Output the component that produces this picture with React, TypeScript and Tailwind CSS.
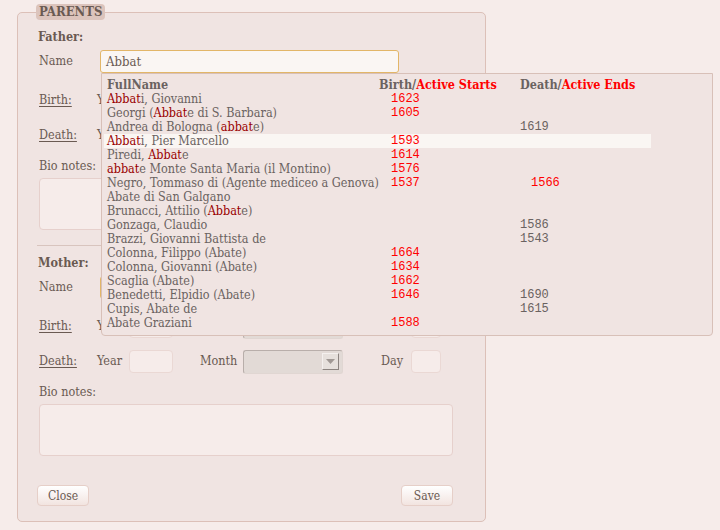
import React from "react";

type Row = {
  name: React.ReactNode;
  birth?: string;
  death?: string;
  deathActive?: boolean;
  selected?: boolean;
};

const M = ({ children }: { children: React.ReactNode }) => (
  <span className="text-[#990000]">{children}</span>
);

const rows: Row[] = [
  { name: <><M>Abbat</M>i, Giovanni</>, birth: "1623" },
  { name: <>Georgi (<M>Abbat</M>e di S. Barbara)</>, birth: "1605" },
  { name: <>Andrea di Bologna (<M>abbat</M>e)</>, death: "1619" },
  { name: <><M>Abbat</M>i, Pier Marcello</>, birth: "1593", selected: true },
  { name: <>Piredi, <M>Abbat</M>e</>, birth: "1614" },
  { name: <><M>abbat</M>e Monte Santa Maria (il Montino)</>, birth: "1576" },
  { name: <>Negro, Tommaso di (Agente mediceo a Genova)</>, birth: "1537", death: "1566", deathActive: true },
  { name: <>Abate di San Galgano</> },
  { name: <>Brunacci, Attilio (<M>Abbat</M>e)</> },
  { name: <>Gonzaga, Claudio</>, death: "1586" },
  { name: <>Brazzi, Giovanni Battista de</>, death: "1543" },
  { name: <>Colonna, Filippo (Abate)</>, birth: "1664" },
  { name: <>Colonna, Giovanni (Abate)</>, birth: "1634" },
  { name: <>Scaglia (Abate)</>, birth: "1662" },
  { name: <>Benedetti, Elpidio (Abate)</>, birth: "1646", death: "1690" },
  { name: <>Cupis, Abate de</>, death: "1615" },
  { name: <>Abate Graziani</>, birth: "1588" },
];

function DateRow({ label, className }: { label: string; className: string }) {
  return (
    <div className={"flex items-center h-[23px] " + className}>
      <span className="w-[58px] underline underline-offset-2">{label}</span>
      <span className="w-[32px]">Year</span>
      <div className="w-[44px] h-[23px] rounded-[4px] border border-[#ead8d4] bg-[#f6ecea]" />
      <span className="ml-[27px] w-[43px]">Month</span>
      <div className="w-[100px] h-[24px] rounded-[3px] border border-[#b8aeaa] border-b-[#e0d6d2] border-r-[#e0d6d2] bg-[#e2dad6] flex items-center justify-end pr-[3px]">
        <div className="w-[17px] h-[17px] bg-[#e6e0dc] border border-[#f4f0ee] border-b-[#8c8480] border-r-[#8c8480] flex items-center justify-center">
          <svg width="9" height="5" viewBox="0 0 9 5">
            <path d="M0 0 H9 L4.5 5 Z" fill="#a09894" />
          </svg>
        </div>
      </div>
      <span className="ml-[38px] w-[30px]">Day</span>
      <div className="w-[30px] h-[23px] rounded-[4px] border border-[#ead8d4] bg-[#f6ecea]" />
    </div>
  );
}

function Person({ title, value }: { title: string; value?: string }) {
  return (
    <div>
      <div className="h-[14px] leading-[14px] font-bold -ml-[1px]">{title}</div>
      <div className="flex items-center mt-[6px] h-[23px]">
        <span className="w-[61px]">Name</span>
        <div className="w-[299px] h-[23px] rounded-[3px] border border-[#e2b668] bg-[#faf6f3] px-[5px] flex items-center text-[13px] text-[#6a5a52]">
          {value}
        </div>
      </div>
      <DateRow label="Birth:" className="mt-[16px]" />
      <DateRow label="Death:" className="mt-[12px]" />
      <div className="mt-[12px] h-[14px] leading-[14px]">Bio notes:</div>
      <div className="mt-[5px] w-[414px] h-[52px] rounded-[4px] border border-[#e6d0cc] bg-[#f6ecea]" />
    </div>
  );
}

export default function App() {
  return (
    <div className="relative w-[720px] min-h-[530px] bg-[#f6ecea] pt-[4px] pl-[17px] font-['DejaVu_Serif_Condensed','DejaVu_Serif',serif] text-[12.5px] text-[#6a5a52]">
      <fieldset className="w-[469px] border border-[#dcc0b8] rounded-[5px] bg-[#f0e4e2] pl-[21px] pt-[10px] pb-[15px]">
        <legend className="-ml-[3px] px-[3px] h-[16px] leading-[16px] rounded-[4px] bg-[#dcc4bc] font-bold text-[13px] text-[#6a5a52]">
          PARENTS
        </legend>
        <Person title="Father:" value="Abbat" />
        <div className="mt-[15px] -ml-[2px] w-[428px] border-t border-[#d8c4be]" />
        <div className="mt-[10px]">
          <Person title="Mother:" />
        </div>
        <div className="mt-[29px] -ml-[2px] w-[416px] flex justify-between">
          <button className="w-[52px] h-[21px] rounded-[4px] border border-[#e6cfc8] bg-gradient-to-b from-white to-[#f2e4e0] text-[12px] text-[#6a5a52]">
            Close
          </button>
          <button className="w-[52px] h-[21px] rounded-[4px] border border-[#e6cfc8] bg-gradient-to-b from-white to-[#f2e4e0] text-[12px] text-[#6a5a52]">
            Save
          </button>
        </div>
      </fieldset>

      <div className="absolute left-[101px] top-[73px] w-[612px] h-[263px] border border-[#d8c0b8] rounded-b-[4px] bg-[#f0e4e2] pt-[4px] pl-[2px]">
        <div className="grid grid-cols-[272px_141px_134px] h-[14px] leading-[14px] font-bold text-[#6a6260]">
          <span className="pl-[3px]">FullName</span>
          <span className="pl-[3px]">
            Birth/<span className="text-[#ff0000]">Active Starts</span>
          </span>
          <span className="pl-[3px] whitespace-nowrap">
            Death/<span className="text-[#ff0000]">Active Ends</span>
          </span>
        </div>
        {rows.map((r, i) => (
          <div
            key={i}
            className={
              "grid grid-cols-[272px_141px_134px] h-[14px] leading-[14px] w-[547px] text-[#6a6260] " +
              (r.selected ? "bg-[#faf6f3]" : "")
            }
          >
            <span className="pl-[3px] whitespace-nowrap">{r.name}</span>
            <span className="pl-[15px] font-['Liberation_Mono',monospace] text-[12px] text-[#ff0000]">{r.birth}</span>
            <span
              className={
                "font-['Liberation_Mono',monospace] text-[12px] " +
                (r.deathActive ? "pl-[14px] text-[#ff0000]" : "pl-[3px] text-[#6a6260]")
              }
            >
              {r.death}
            </span>
          </div>
        ))}
      </div>
    </div>
  );
}
